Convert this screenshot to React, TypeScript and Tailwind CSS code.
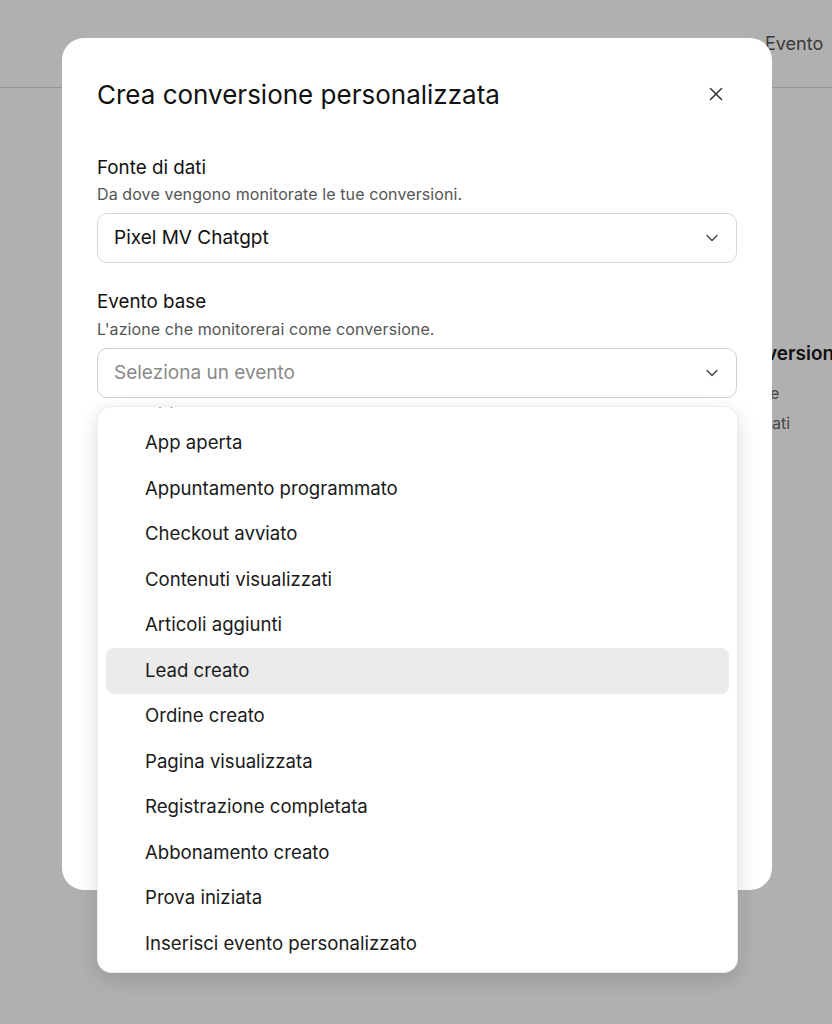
import { X, ChevronDown } from "lucide-react";

const events = [
  "App installata",
  "App aperta",
  "Appuntamento programmato",
  "Checkout avviato",
  "Contenuti visualizzati",
  "Articoli aggiunti",
  "Lead creato",
  "Ordine creato",
  "Pagina visualizzata",
  "Registrazione completata",
  "Abbonamento creato",
  "Prova iniziata",
  "Inserisci evento personalizzato",
];

const font = { fontFamily: "Inter, 'Noto Sans', sans-serif" };

const App = () => {
  return (
    <div
      className="relative w-[832px] h-[1024px] overflow-hidden bg-white text-[#1a1a1a]"
      style={font}
    >
      {/* page behind the overlay */}
      <div className="h-[88px] border-b border-[#d8d8d8] pl-[765px] pt-[30px]">
        <span className="text-[18px] text-[#555] whitespace-nowrap">Evento</span>
      </div>
      <div className="pl-[766px] pt-[252px] flex flex-col">
        <span className="text-[19px] font-semibold whitespace-nowrap">versioni</span>
        <span className="text-[16px] text-[#666] mt-[12px] pl-[4px]">e</span>
        <span className="text-[16px] text-[#666] mt-[6px] pl-[6px]">ati</span>
      </div>

      {/* overlay */}
      <div className="absolute inset-0 bg-black/[0.31]" />

      {/* modal */}
      <div className="absolute left-[62px] top-[38px] w-[710px] h-[852px] bg-white rounded-[22px] px-[35px] pt-[40px]">
        <div className="flex items-center justify-between">
          <h2 className="text-[26px] leading-[34px] text-[#111]">
            Crea conversione personalizzata
          </h2>
          <X className="w-[22px] h-[22px] mr-[10px] -mt-[3px] text-[#333]" strokeWidth={1.6} />
        </div>

        <div className="mt-[44px]">
          <div className="text-[18.8px] leading-[24px] text-[#111]">Fonte di dati</div>
          <div className="text-[16px] leading-[20px] mt-[4px] tracking-[0.1px] text-[#555]">
            Da dove vengono monitorate le tue conversioni.
          </div>
          <div className="mt-[9px] h-[50px] border border-[#d6d6d6] rounded-[10px] flex items-center justify-between pl-[16px] pr-[14px]">
            <span className="text-[19px] text-[#111]">Pixel MV Chatgpt</span>
            <ChevronDown className="w-[20px] h-[20px] text-[#444]" strokeWidth={1.6} />
          </div>
        </div>

        <div className="mt-[27px]">
          <div className="text-[18.8px] leading-[24px] text-[#111]">Evento base</div>
          <div className="text-[16px] leading-[20px] mt-[5px] tracking-[0.1px] text-[#555]">
            L'azione che monitorerai come conversione.
          </div>
          <div className="mt-[9px] h-[50px] border border-[#d0d0d0] rounded-[10px] flex items-center justify-between pl-[16px] pr-[14px]">
            <span className="text-[19px] text-[#8a8a8a]">Seleziona un evento</span>
            <ChevronDown className="w-[20px] h-[20px] text-[#444]" strokeWidth={1.6} />
          </div>
        </div>
      </div>

      {/* dropdown popover */}
      <div className="absolute left-[97px] top-[406px] w-[641px] h-[567px] bg-white rounded-[14px] border border-[#ececec] shadow-[0_6px_20px_rgba(0,0,0,0.14)] overflow-hidden">
        <div className="flex flex-col px-[8px] -mt-[32px]">
          {events.map((e) => (
            <div
              key={e}
              className={
                "h-[45.5px] shrink-0 flex items-center pl-[39px] rounded-[8px] text-[18.6px] text-[#1a1a1a] " +
                (e === "Lead creato" ? "bg-[#ebebeb]" : "")
              }
            >
              {e}
            </div>
          ))}
        </div>
      </div>
    </div>
  );
};

export default App;
